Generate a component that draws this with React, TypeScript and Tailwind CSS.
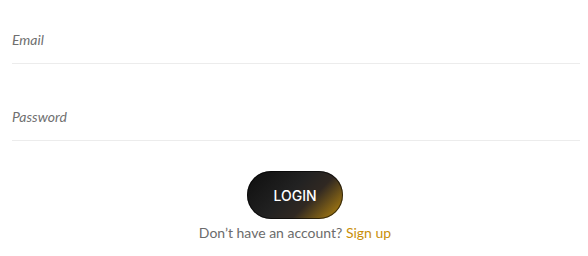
export default function App() {
  return (
    <div className="w-[588px] h-[256px] bg-white pl-3 pr-2 pt-[27px]" style={{ fontFamily: 'Lato, "Liberation Sans", sans-serif' }}>
      <div className="border-b border-[#ececec] pb-[12px]">
        <input
          type="email"
          placeholder="Email"
          className="w-full h-5 text-[14px] italic text-[#6f6f6f] placeholder:text-[#6f6f6f] outline-none bg-transparent"
        />
      </div>
      <div className="mt-[40px] border-b border-[#ececec] pb-[12px]">
        <input
          type="password"
          placeholder="Password"
          className="w-full h-5 text-[14px] italic text-[#6f6f6f] placeholder:text-[#6f6f6f] outline-none bg-transparent"
        />
      </div>
      <div className="mt-[30px] flex flex-col items-center pr-[2px]">
        <button
          className="w-[96px] h-[48px] rounded-full text-white text-[14px] font-medium bg-[linear-gradient(135deg,#0e0e0e_0%,#222_45%,#302822_64%,#c08d0c_100%)] shadow-[inset_0_0_0_1px_rgba(0,0,0,0.6)]"
          style={{ fontFamily: 'Inter, "Liberation Sans", sans-serif' }}
        >
          LOGIN
        </button>
        <p className="mt-[4px] text-[14px] leading-5 text-[#6b6b6b]">
          Don’t have an account? <a href="#" className="text-[#c98f0a]">Sign up</a>
        </p>
      </div>
    </div>
  );
}
